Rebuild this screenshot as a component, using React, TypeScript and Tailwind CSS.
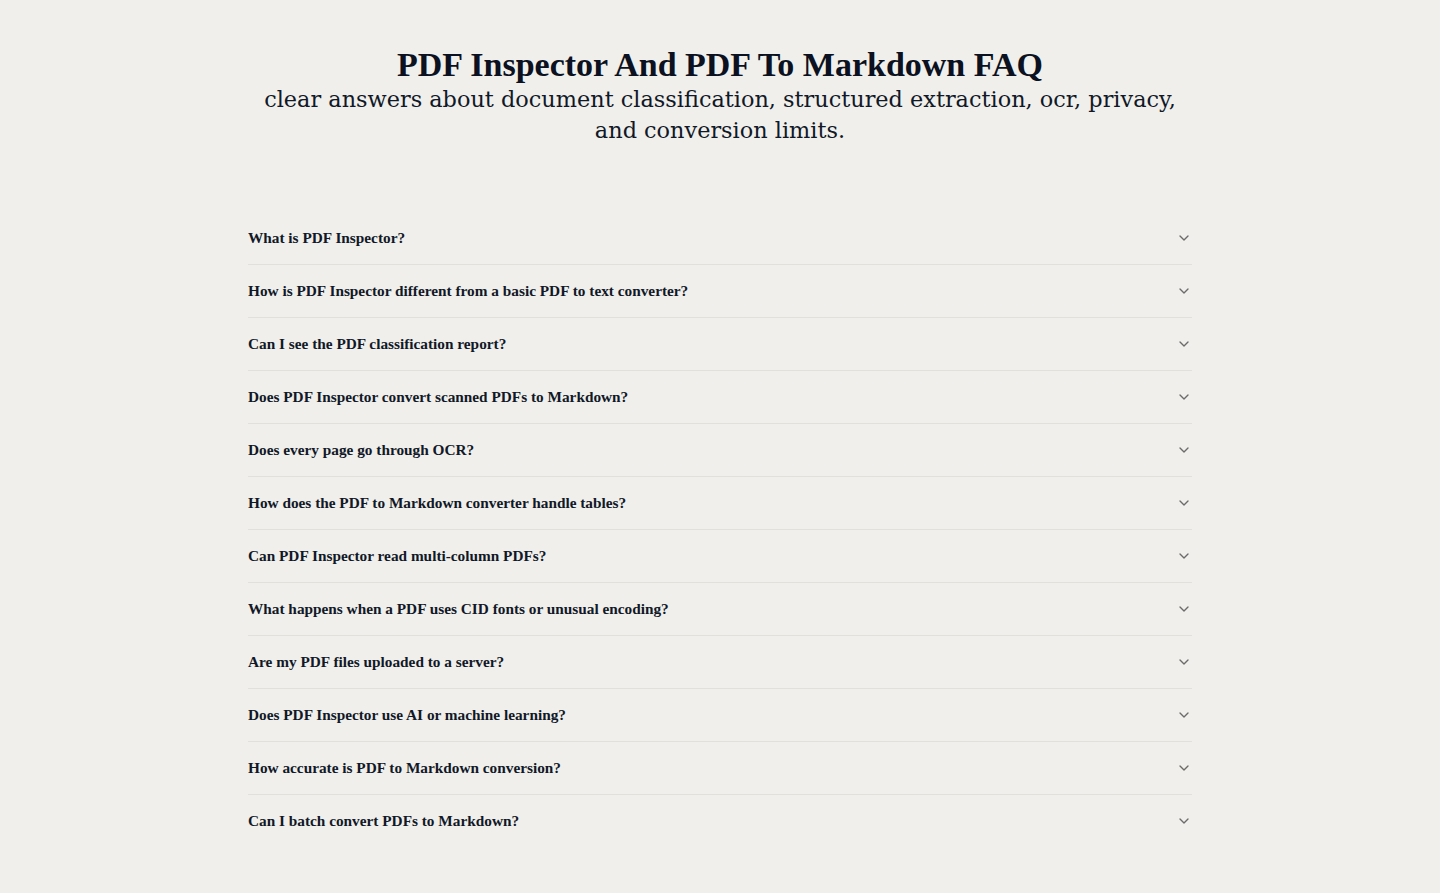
import { useState } from "react";
import { ChevronDown } from "lucide-react";

const questions = [
  "What is PDF Inspector?",
  "How is PDF Inspector different from a basic PDF to text converter?",
  "Can I see the PDF classification report?",
  "Does PDF Inspector convert scanned PDFs to Markdown?",
  "Does every page go through OCR?",
  "How does the PDF to Markdown converter handle tables?",
  "Can PDF Inspector read multi-column PDFs?",
  "What happens when a PDF uses CID fonts or unusual encoding?",
  "Are my PDF files uploaded to a server?",
  "Does PDF Inspector use AI or machine learning?",
  "How accurate is PDF to Markdown conversion?",
  "Can I batch convert PDFs to Markdown?",
];

export default function App() {
  const [open, setOpen] = useState<number | null>(null);

  return (
    <div
      className="min-h-screen bg-[#f0efeb] text-[#0b1120]"
      style={{ fontFamily: '"Liberation Serif", "DejaVu Serif", serif' }}
    >
      <div className="mx-auto w-[944px] pt-[44px] pb-12">
        {/* Header */}
        <div className="text-center">
          <h1 className="text-[34px] leading-[42px] font-bold">
            PDF Inspector And PDF To Markdown FAQ
          </h1>
          <p
            className="mx-auto -mt-[2px] text-[22.4px] leading-[31px] text-[#111827]"
            style={{ fontFamily: '"DejaVu Serif", serif' }}
          >
            clear answers about document classification, structured extraction, ocr, privacy, and conversion limits.
          </p>
        </div>

        {/* FAQ list */}
        <div className="mt-[66px]">
          {questions.map((q, i) => (
            <div key={q} className={i < questions.length - 1 ? "border-b border-[#e2e0da]" : ""}>
              <button
                type="button"
                onClick={() => setOpen(open === i ? null : i)}
                className="flex w-full items-center justify-between h-[52px] text-left"
              >
                <span className="text-[15.3px] font-bold text-[#111827]">{q}</span>
                <ChevronDown
                  size={16}
                  className={`text-[#6b6b6b] transition-transform ${open === i ? "rotate-180" : ""}`}
                />
              </button>
              {open === i && (
                <div className="pb-4 text-[15px] text-[#374151]">
                  Answer coming soon.
                </div>
              )}
            </div>
          ))}
        </div>
      </div>
    </div>
  );
}
